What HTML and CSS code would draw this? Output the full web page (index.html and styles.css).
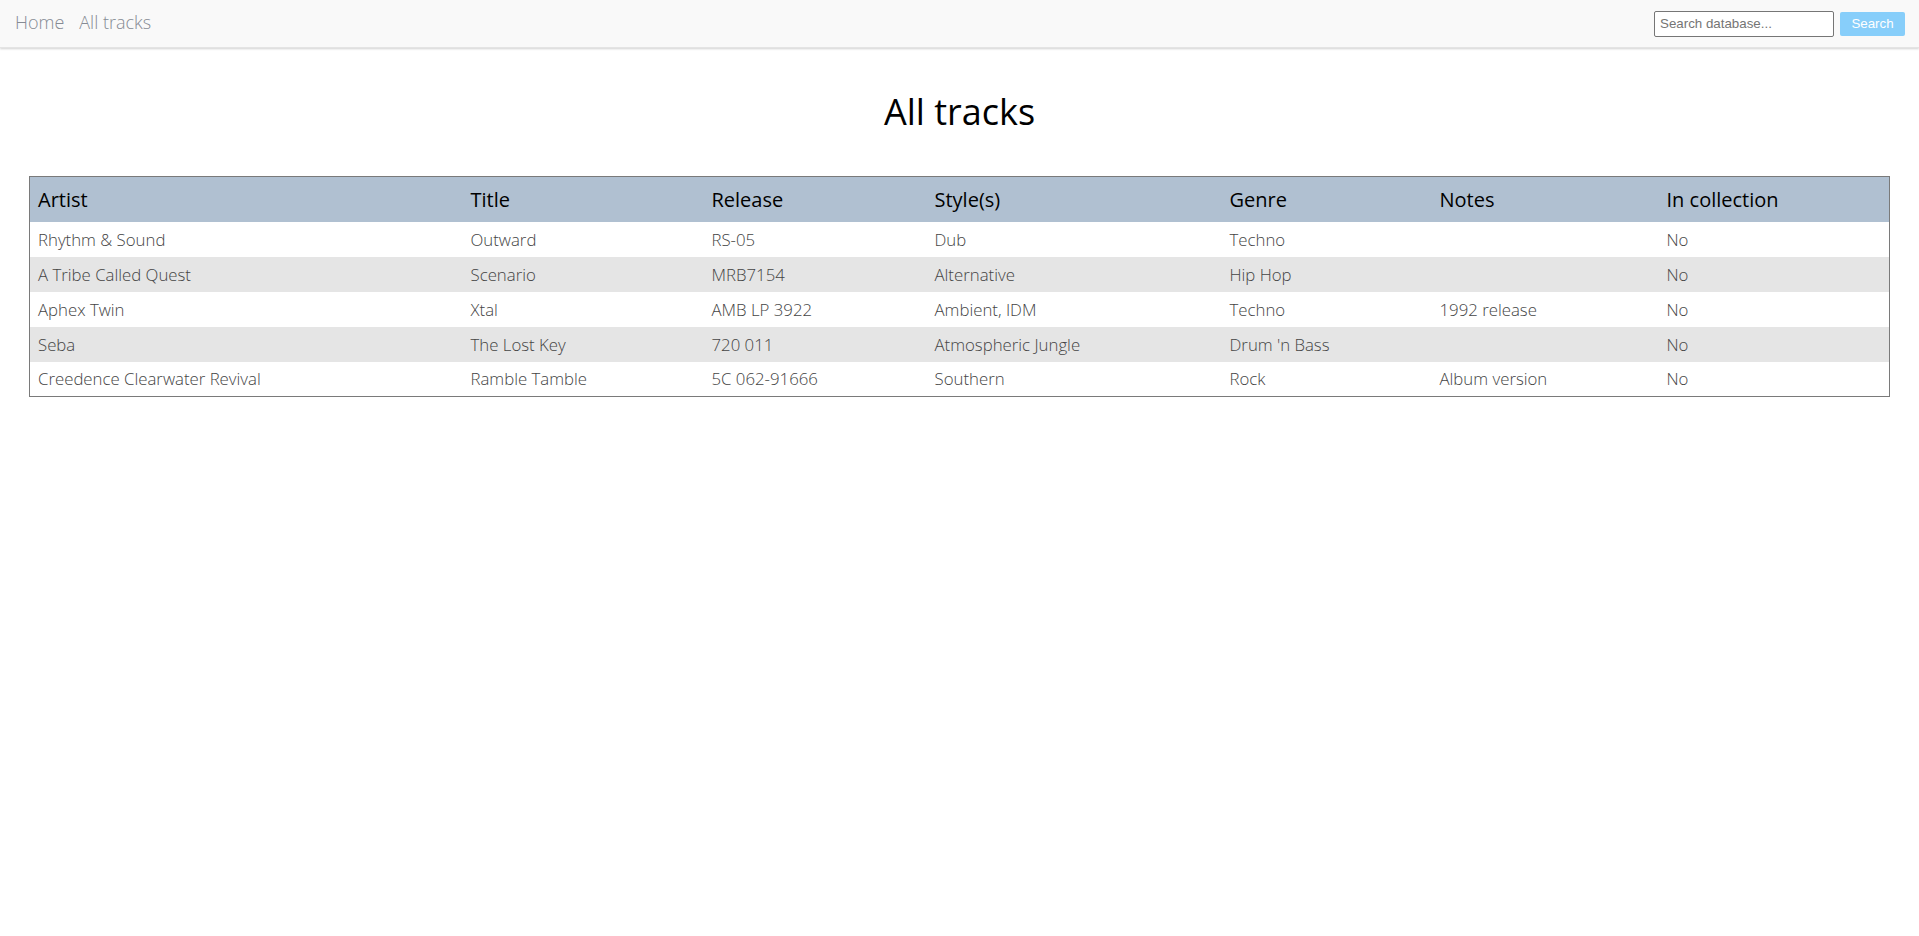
FILE: index.html
```html
<!DOCTYPE html>
<html lang="en">
<head>
<meta charset="utf-8">
<title>All tracks</title>
<link rel="stylesheet" href="styles.css">
</head>
<body>
<nav class="navbar">
  <div class="nav-links">
    <a class="nav-link" href="#">Home</a>
    <a class="nav-link" href="#">All tracks</a>
  </div>
  <form class="search-form">
    <input class="search-input" type="text" placeholder="Search database...">
    <button class="search-button" type="button">Search</button>
  </form>
</nav>
<main class="content">
  <h1 class="page-title">All tracks</h1>
  <table class="tracks">
    <colgroup>
      <col class="col-artist">
      <col class="col-title">
      <col class="col-release">
      <col class="col-style">
      <col class="col-genre">
      <col class="col-notes">
      <col class="col-collection">
    </colgroup>
    <thead>
      <tr>
        <th>Artist</th><th>Title</th><th>Release</th><th>Style(s)</th><th>Genre</th><th>Notes</th><th>In collection</th>
      </tr>
    </thead>
    <tbody>
      <tr><td>Rhythm &amp; Sound</td><td>Outward</td><td>RS-05</td><td>Dub</td><td>Techno</td><td></td><td>No</td></tr>
      <tr><td>A Tribe Called Quest</td><td>Scenario</td><td>MRB7154</td><td>Alternative</td><td>Hip Hop</td><td></td><td>No</td></tr>
      <tr><td>Aphex Twin</td><td>Xtal</td><td>AMB LP 3922</td><td>Ambient, IDM</td><td>Techno</td><td>1992 release</td><td>No</td></tr>
      <tr><td>Seba</td><td>The Lost Key</td><td>720 011</td><td>Atmospheric Jungle</td><td>Drum 'n Bass</td><td></td><td>No</td></tr>
      <tr><td>Creedence Clearwater Revival</td><td>Ramble Tamble</td><td>5C 062-91666</td><td>Southern</td><td>Rock</td><td>Album version</td><td>No</td></tr>
    </tbody>
  </table>
</main>
</body>
</html>
```

FILE: styles.css
```css
html, body {
  margin: 0;
  padding: 0;
  background: #ffffff;
}

body {
  font-family: "Open Sans", "Liberation Sans", sans-serif;
  color: #000;
}

.navbar {
  height: 48px;
  box-sizing: border-box;
  display: flex;
  align-items: center;
  justify-content: space-between;
  padding: 0 14px 0 15px;
  background: #f9f9f9;
  box-shadow: 0 1px 2px rgba(0, 0, 0, 0.18);
  border-bottom: 1px solid #e4e4e4;
}

.nav-links {
  display: flex;
  gap: 15px;
  margin-top: -3px;
}

.nav-link {
  font-family: "Open Sans", sans-serif;
  font-weight: 300;
  font-size: 18px;
  color: #868b94;
  text-decoration: none;
}

.search-form {
  display: flex;
  align-items: center;
  gap: 6px;
  margin-top: 0;
}

.search-input {
  width: 180px;
  height: 26px;
  box-sizing: border-box;
  border: 1px solid #767676;
  border-radius: 2px;
  padding: 1px 5px;
  font-family: "Liberation Sans", Arial, sans-serif;
  font-size: 13.333px;
  color: #333;
  background: #fff;
}

.search-input::placeholder {
  color: #757575;
}

.search-button {
  width: 65px;
  height: 24px;
  border: none;
  border-radius: 2px;
  background: #87cefa;
  color: #ffffff;
  font-family: "Liberation Sans", Arial, sans-serif;
  font-size: 13.333px;
  padding: 0;
}

.content {
  padding: 0 29px;
}

.page-title {
  margin: 38px 0 38px;
  text-align: center;
  font-family: "Open Sans", sans-serif;
  font-weight: 400;
  font-size: 36px;
  line-height: 52px;
  color: #000;
}

.tracks {
  width: 100%;
  table-layout: fixed;
  border-collapse: collapse;
  border: 1px solid #7a7a7a;
}

.col-artist { width: 433px; }
.col-title { width: 241px; }
.col-release { width: 223px; }
.col-style { width: 295px; }
.col-genre { width: 210px; }
.col-notes { width: 227px; }
.col-collection { width: auto; }

.tracks th {
  height: 45px;
  box-sizing: border-box;
  padding: 0 8px;
  text-align: left;
  background: #b0c0d1;
  font-family: "Open Sans", sans-serif;
  font-weight: 400;
  font-size: 20px;
  color: #000;
  vertical-align: middle;
}

.tracks td {
  height: 35px;
  box-sizing: border-box;
  padding: 0 8px;
  font-family: "Open Sans", sans-serif;
  font-weight: 300;
  font-size: 16.8px;
  color: #444;
  vertical-align: middle;
  white-space: nowrap;
}

.tracks tbody tr:nth-child(even) td {
  background: #e5e5e5;
}
```
